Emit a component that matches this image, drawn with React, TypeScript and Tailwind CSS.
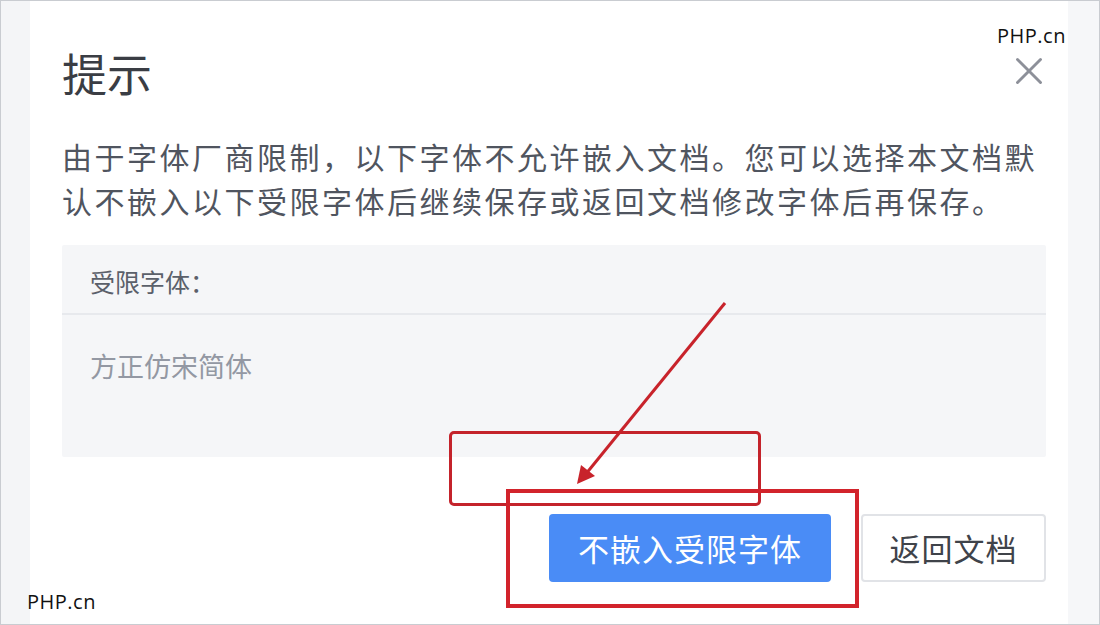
import { X } from 'lucide-react'

const cjk = { fontFamily: '"Noto Sans CJK SC", "Noto Sans", sans-serif' }
const mark = { fontFamily: '"Open Sans", "Liberation Sans", sans-serif' }

export default function App() {
  return (
    <div className="relative w-[1100px] h-[625px] flex border border-[#c9ccd1] bg-[#f5f6f8] overflow-hidden" style={cjk}>
      <div className="w-[29px] shrink-0 bg-[#f4f5f7]" />

      {/* dialog */}
      <div className="w-[1038px] shrink-0 bg-white pl-[32px] pr-[22px] pt-[46px]">
        <div className="flex items-start justify-between">
          <h1 className="text-[45px] leading-[52px] text-[#3a3d44]">提示</h1>
          <X size={46} strokeWidth={1.5} className="text-[#8d9099] mt-[1px] -mr-[6px]" />
        </div>

        <p className="mt-[35px] text-[30px] leading-[44px] tracking-[2.5px] text-[#50555f]">
          由于字体厂商限制，以下字体不允许嵌入文档。您可以选择本文档默认不嵌入以下受限字体后继续保存或返回文档修改字体后再保存。
        </p>

        <div className="mt-[23px] bg-[#f5f6f8] rounded-[2px]">
          <div className="h-[70px] flex items-center pl-[28px] pt-[6px] border-b-2 border-[#e7e9ed] text-[25px] text-[#5b606a]">
            受限字体：
          </div>
          <div className="h-[142px] pl-[28px] pt-[31px] text-[27px] leading-[40px] text-[#9398a3]">方正仿宋简体</div>
        </div>

        <div className="mt-[57px] flex justify-end gap-[30px]">
          <button className="w-[282px] h-[68px] rounded-[4px] bg-[#4a8cf6] text-white text-[31px] tracking-[1px]">
            不嵌入受限字体
          </button>
          <button className="w-[185px] h-[68px] rounded-[4px] bg-white border-2 border-[#e1e3e7] text-[#3f434a] text-[31px] tracking-[1px]">
            返回文档
          </button>
        </div>
      </div>

      <div className="flex-1 bg-[#f6f7f9]" />

      {/* watermarks */}
      <span className="absolute left-[996px] top-[20px] text-[20px] text-[#111] tracking-[0.5px]" style={mark}>
        PHP.cn
      </span>
      <span className="absolute left-[26px] top-[586px] text-[20px] text-[#111] tracking-[0.5px]" style={mark}>
        PHP.cn
      </span>

      {/* red annotations */}
      <div className="absolute left-[448px] top-[430px] w-[312px] h-[75px] border-[3px] border-[#c4232b] rounded-[5px]" />
      <div className="absolute left-[505px] top-[488px] w-[353px] h-[119px] border-[4px] border-[#d2232b]" />
      <svg className="absolute left-0 top-0" width="1100" height="625" viewBox="0 0 1100 625">
        <line x1="724" y1="302" x2="584" y2="474" stroke="#c8232b" strokeWidth="3" />
        <polygon points="576,483 580,464 594,475" fill="#c8232b" />
      </svg>
    </div>
  )
}
